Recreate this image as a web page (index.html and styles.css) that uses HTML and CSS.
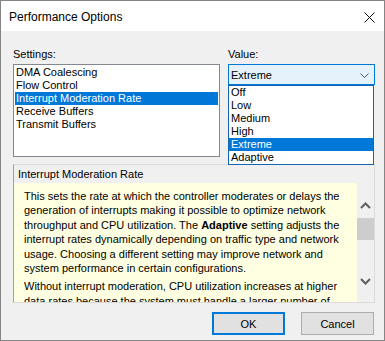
FILE: index.html
```html
<!DOCTYPE html>
<html lang="en">
<head>
    <meta charset="UTF-8">
    <title>Performance Options</title>
    <link rel="stylesheet" href="styles.css">
</head>
<body>
    <div class="window">
        <div class="titlebar">
            <span class="title">Performance Options</span>
            <svg class="close" width="11" height="11" viewBox="0 0 11 11">
                <path d="M0.5 0.5 L10.5 10.5 M10.5 0.5 L0.5 10.5" stroke="#111" stroke-width="1" fill="none"/>
            </svg>
        </div>

        <div class="content">
            <div class="columns">
                <div class="col-settings">
                    <div class="label">Settings:</div>
                    <ul class="listbox">
                        <li>DMA Coalescing</li>
                        <li>Flow Control</li>
                        <li class="selected">Interrupt Moderation Rate</li>
                        <li>Receive Buffers</li>
                        <li>Transmit Buffers</li>
                    </ul>
                </div>
                <div class="col-value">
                    <div class="label">Value:</div>
                    <div class="combo">
                        <span>Extreme</span>
                        <svg class="combo-arrow" width="9" height="5" viewBox="0 0 9 5">
                            <path d="M0.5 0.5 L4.5 4.5 L8.5 0.5" stroke="#555" stroke-width="1" fill="none"/>
                        </svg>
                    </div>
                    <ul class="dropdown">
                        <li>Off</li>
                        <li>Low</li>
                        <li>Medium</li>
                        <li>High</li>
                        <li class="selected">Extreme</li>
                        <li>Adaptive</li>
                    </ul>
                </div>
            </div>

            <div class="desc">
                <div class="desc-header">Interrupt Moderation Rate</div>
                <div class="desc-body">
                    <div class="desc-text">
                        <p>This sets the rate at which the controller moderates or delays the generation of interrupts making it possible to optimize network throughput and CPU utilization. The <b>Adaptive</b> setting adjusts the interrupt rates dynamically depending on traffic type and network usage. Choosing a different setting may improve network and system performance in certain configurations.</p>
                        <p>Without interrupt moderation, CPU utilization increases at higher data rates because the system must handle a larger number of interrupts.</p>
                    </div>
                    <div class="scrollbar">
                        <div class="sb-up">
                            <svg width="11" height="7" viewBox="0 0 11 7">
                                <path d="M1 6 L5.5 1.5 L10 6" stroke="#606060" stroke-width="2" fill="none"/>
                            </svg>
                        </div>
                        <div class="sb-thumb"></div>
                        <div class="sb-track"></div>
                        <div class="sb-down">
                            <svg width="11" height="7" viewBox="0 0 11 7">
                                <path d="M1 1 L5.5 5.5 L10 1" stroke="#606060" stroke-width="2" fill="none"/>
                            </svg>
                        </div>
                    </div>
                </div>
            </div>

            <div class="buttons">
                <button class="btn btn-default">OK</button>
                <button class="btn">Cancel</button>
            </div>
        </div>
    </div>
</body>
</html>
```

FILE: styles.css
```css
* {
    box-sizing: border-box;
}

body {
    margin: 0;
    padding: 0;
    background: #f0f0f0;
    font-family: "Liberation Sans", Arial, sans-serif;
    font-size: 11px;
    color: #000;
}

.window {
    width: 385px;
    height: 341px;
    border: 1px solid #858585;
    background: #f0f0f0;
    display: flex;
    flex-direction: column;
}

.titlebar {
    height: 30px;
    background: #fff;
    display: flex;
    align-items: center;
    justify-content: space-between;
    padding: 1px 9px 0 8px;
}

.title {
    font-size: 12px;
}

.close {
    margin-top: 1px;
}

.content {
    flex: 1;
    padding: 17px 9px 0 12px;
    display: flex;
    flex-direction: column;
}

.columns {
    display: flex;
    gap: 8px;
}

.label {
    height: 13px;
    line-height: 13px;
    margin-bottom: 3px;
}

.col-settings {
    width: 207px;
}

.col-value {
    width: 147px;
    position: relative;
}

.listbox {
    list-style: none;
    margin: 0;
    height: 93px;
    padding: 1px;
    background: #fff;
    border: 1px solid #828790;
}

.listbox li {
    height: 13px;
    line-height: 13px;
    padding-left: 1px;
    white-space: nowrap;
}

.listbox li.selected,
.dropdown li.selected {
    background: #0078d7;
    color: #fff;
}

.combo {
    height: 21px;
    background: #e5f1fb;
    border: 1px solid #0078d7;
    display: flex;
    align-items: center;
    justify-content: space-between;
    padding: 0 5px 0 2px;
}

.combo-arrow {
    margin-top: 1px;
}

.dropdown {
    position: absolute;
    top: 37px;
    left: 0;
    width: 146px;
    height: 80px;
    margin: 0;
    padding: 0;
    list-style: none;
    background: #fff;
    border: 1px solid #1664b4;
    z-index: 2;
}

.dropdown li {
    height: 13px;
    line-height: 13px;
    padding-left: 2px;
}

.desc {
    margin-top: 7px;
    height: 139px;
    border: 1px solid #dadada;
    border-left-color: #a0a0a0;
    display: flex;
    flex-direction: column;
}

.desc-header {
    height: 18px;
    line-height: 18px;
    padding-left: 4px;
}

.desc-body {
    flex: 1;
    display: flex;
    background: #ffffe1;
    overflow: hidden;
}

.desc-text {
    flex: 1;
    padding: 6px 8px 0 10px;
    line-height: 14.4px;
    overflow: hidden;
}

.desc-text p {
    margin: 0 0 4px;
}

.scrollbar {
    width: 17px;
    background: #f0f0f0;
    display: flex;
    flex-direction: column;
}

.sb-up {
    height: 35px;
    display: flex;
    align-items: flex-end;
    justify-content: center;
    padding-bottom: 9px;
}

.sb-thumb {
    height: 22px;
    background: #cdcdcd;
}

.sb-track {
    flex: 1;
}

.sb-down {
    height: 24px;
    display: flex;
    justify-content: center;
}

.buttons {
    display: flex;
    justify-content: flex-end;
    gap: 16px;
    margin-top: 9px;
    padding-right: 1px;
}

.btn {
    width: 73px;
    height: 23px;
    font-family: "Liberation Sans", Arial, sans-serif;
    font-size: 11px;
    background: #e1e1e1;
    border: 1px solid #adadad;
    padding: 0;
    color: #000;
}

.btn-default {
    border-color: #0078d7;
    box-shadow: inset 0 0 0 1px #0078d7;
}
```
